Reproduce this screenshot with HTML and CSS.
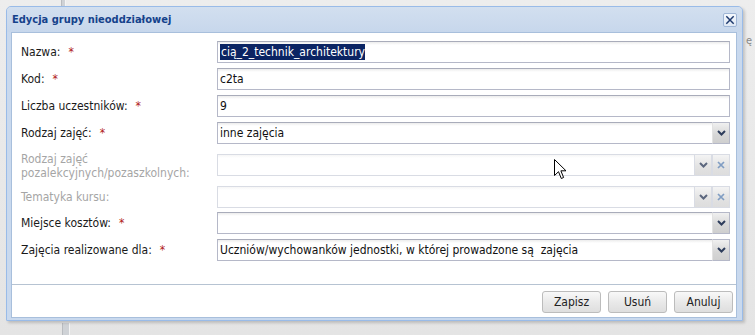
FILE: index.html
```html
<!DOCTYPE html>
<html lang="pl">
<head>
<meta charset="utf-8">
<title>Edycja grupy nieoddziałowej</title>
<link rel="stylesheet" href="styles.css">
</head>
<body>
<div class="desktop">
  <div class="bg-sep bg-sep-top"></div>
  <div class="bg-sep bg-sep-bottom"></div>
  <span class="bg-text">ę</span>

  <div class="window">
    <div class="win-header">
      <span class="win-title">Edycja grupy nieoddziałowej</span>
      <span class="tool-close">
        <svg width="13" height="13" viewBox="0 0 13 13"><path d="M2.5 2.5 L10.5 10.5 M10.5 2.5 L2.5 10.5" stroke="#1e3a6e" stroke-width="1.6" fill="none"/></svg>
      </span>
    </div>
    <div class="win-body">
      <div class="form">
        <div class="label">Nazwa:<span class="req">*</span></div>
        <div class="field"><div class="input"><span class="sel">cią_2_technik_architektury</span></div></div>

        <div class="label">Kod:<span class="req">*</span></div>
        <div class="field"><div class="input">c2ta</div></div>

        <div class="label">Liczba uczestników:<span class="req">*</span></div>
        <div class="field"><div class="input">9</div></div>

        <div class="label">Rodzaj zajęć:<span class="req">*</span></div>
        <div class="field combo"><div class="input">inne zajęcia</div><span class="trigger"><svg width="9" height="6" viewBox="0 0 9 6"><path d="M1 1 L4.5 4.5 L8 1" stroke="#2e3d5c" stroke-width="2" fill="none"/></svg></span></div>

        <div class="label disabled tall">Rodzaj zajęć<br>pozalekcyjnych/pozaszkolnych:</div>
        <div class="field combo disabled"><div class="input"></div><span class="trigger"><svg width="9" height="6" viewBox="0 0 9 6"><path d="M1 1 L4.5 4.5 L8 1" stroke="#2e3d5c" stroke-width="2" fill="none"/></svg></span><span class="trigger clear"><svg width="8" height="8" viewBox="0 0 8 8"><path d="M1 1 L7 7 M7 1 L1 7" stroke="#5f86b8" stroke-width="1.7" fill="none"/></svg></span></div>

        <div class="label disabled">Tematyka kursu:</div>
        <div class="field combo disabled"><div class="input"></div><span class="trigger"><svg width="9" height="6" viewBox="0 0 9 6"><path d="M1 1 L4.5 4.5 L8 1" stroke="#2e3d5c" stroke-width="2" fill="none"/></svg></span><span class="trigger clear"><svg width="8" height="8" viewBox="0 0 8 8"><path d="M1 1 L7 7 M7 1 L1 7" stroke="#5f86b8" stroke-width="1.7" fill="none"/></svg></span></div>

        <div class="label">Miejsce kosztów:<span class="req">*</span></div>
        <div class="field combo"><div class="input"></div><span class="trigger"><svg width="9" height="6" viewBox="0 0 9 6"><path d="M1 1 L4.5 4.5 L8 1" stroke="#2e3d5c" stroke-width="2" fill="none"/></svg></span></div>

        <div class="label">Zajęcia realizowane dla:<span class="req">*</span></div>
        <div class="field combo"><div class="input">Uczniów/wychowanków jednostki, w której prowadzone są&nbsp; zajęcia</div><span class="trigger"><svg width="9" height="6" viewBox="0 0 9 6"><path d="M1 1 L4.5 4.5 L8 1" stroke="#2e3d5c" stroke-width="2" fill="none"/></svg></span></div>
      </div>
      <div class="footer">
        <button class="btn">Zapisz</button>
        <button class="btn">Usuń</button>
        <button class="btn">Anuluj</button>
      </div>
    </div>
  </div>

  <svg class="cursor" width="13" height="21" viewBox="0 0 13 21"><path d="M0.5 0.5 L0.5 16.5 L4.5 12.7 L7.3 19.5 L9.6 18.5 L6.9 11.8 L12 11.8 Z" fill="#fff" stroke="#000" stroke-width="1"/></svg>
</div>
</body>
</html>
```
FILE: styles.css
```css
* { box-sizing: border-box; }
html, body { margin: 0; padding: 0; }
body {
  width: 755px;
  height: 335px;
  overflow: hidden;
  background: #e6e6e6;
  font-family: "DejaVu Sans Condensed", "DejaVu Sans", sans-serif;
  font-size: 12px;
  color: #111;
}
.desktop {
  position: relative;
  width: 755px;
  height: 335px;
  background: linear-gradient(#ededed, #e4e4e4);
}
.bg-sep {
  position: absolute;
  background: #cfd2d6;
  border-left: 1px solid #b9bcc0;
  border-right: 1px solid #f4f4f4;
}
.bg-sep-top { left: 61px; top: 0; width: 5px; height: 7px; }
.bg-sep-bottom { left: 62px; top: 323px; width: 8px; height: 12px; }
.bg-text {
  position: absolute;
  left: 746px;
  top: 34px;
  color: #888;
  font-size: 11px;
}

.window {
  position: absolute;
  left: 6px;
  top: 6px;
  width: 737px;
  height: 315px;
  display: flex;
  flex-direction: column;
  background: #c9d9ee;
  border: 1px solid #99bbe8;
  border-radius: 5px 5px 1px 1px;
  padding: 0 5px 2px 4px;
  box-shadow: 2px 2px 3px rgba(0,0,0,0.18);
}
.win-header {
  height: 25px;
  flex: none;
  display: flex;
  align-items: center;
  justify-content: space-between;
  background: linear-gradient(#d2dfef, #c7d7ec);
  margin: 0 -5px 0 -4px;
  padding: 0 5px 0 5px;
  border-radius: 4px 4px 0 0;
}
.win-title {
  font-weight: bold;
  color: #15428b;
  font-size: 11px;
}
.tool-close {
  width: 14px;
  height: 14px;
  display: flex;
  background: linear-gradient(#f4f8fd, #dfe8f4);
  border: 1px solid #9fb6d6;
  border-radius: 2px;
  align-items: center;
  justify-content: center;
  margin-top: 1px;
}
.tool-close svg { display: block; width: 12px; height: 12px; }

.win-body {
  flex: 1;
  display: flex;
  flex-direction: column;
  background: #fff;
  border: 1px solid #a8bfdc;
}
.form {
  flex: 1;
  display: grid;
  grid-template-columns: 196px 1fr;
  grid-template-rows: 22px 22px 22px 22px 32px 21px 22px 22px;
  row-gap: 5px;
  align-items: center;
  padding: 8px 6px 0 9px;
}
.label {
  color: #1a1a1a;
  white-space: nowrap;
  line-height: 14px;
}
.label.tall { line-height: 13.5px; padding-top: 3px; }
.label.disabled { color: #a5a5a5; }
.req {
  color: #b01818;
  margin-left: 8px;
}

.field {
  height: 22px;
  display: flex;
}
.input {
  flex: 1;
  height: 22px;
  border: 1px solid #b5b8c8;
  border-top-color: #a9acba;
  background: linear-gradient(#ececec 0, #fff 3px);
  padding: 3px 3px 0 2px;
  line-height: 14px;
  white-space: nowrap;
  overflow: hidden;
  color: #111;
}
.sel {
  background: #0b2463;
  color: #fff;
  padding: 1px 0 1px 1px;
}
.combo .input { border-right: none; }
.trigger {
  flex: none;
  width: 18px;
  height: 22px;
  display: flex;
  align-items: center;
  justify-content: center;
  background: linear-gradient(#f0f0f0, #d6d6d6 60%, #cfcfcf);
  border: 1px solid #b5b8c8;
  border-left: 1px solid #e2e2e2;
}
.trigger svg { display: block; }
.disabled .input { border-color: #d9dce4; background: linear-gradient(#f6f6f6 0, #fff 3px); }
.disabled .trigger { border-color: #d9dce4; background: linear-gradient(#f4f4f4, #e2e2e2 60%, #dddddd); }
.disabled .trigger svg { opacity: 0.75; }

.footer {
  flex: none;
  height: 33px;
  border-top: 1px solid #b6c3d2;
  display: flex;
  justify-content: flex-end;
  align-items: flex-start;
  gap: 7px;
  padding: 6px 3px 0 0;
}
.btn {
  width: 59px;
  height: 22px;
  font-family: "DejaVu Sans Condensed", "DejaVu Sans", sans-serif;
  font-size: 12px;
  color: #222;
  background: linear-gradient(#f8f8f8, #e9e9e9 50%, #dedede);
  border: 1px solid #bcbcbc;
  border-radius: 3px;
  padding: 0;
}

.cursor {
  position: absolute;
  left: 554px;
  top: 159px;
}
```
